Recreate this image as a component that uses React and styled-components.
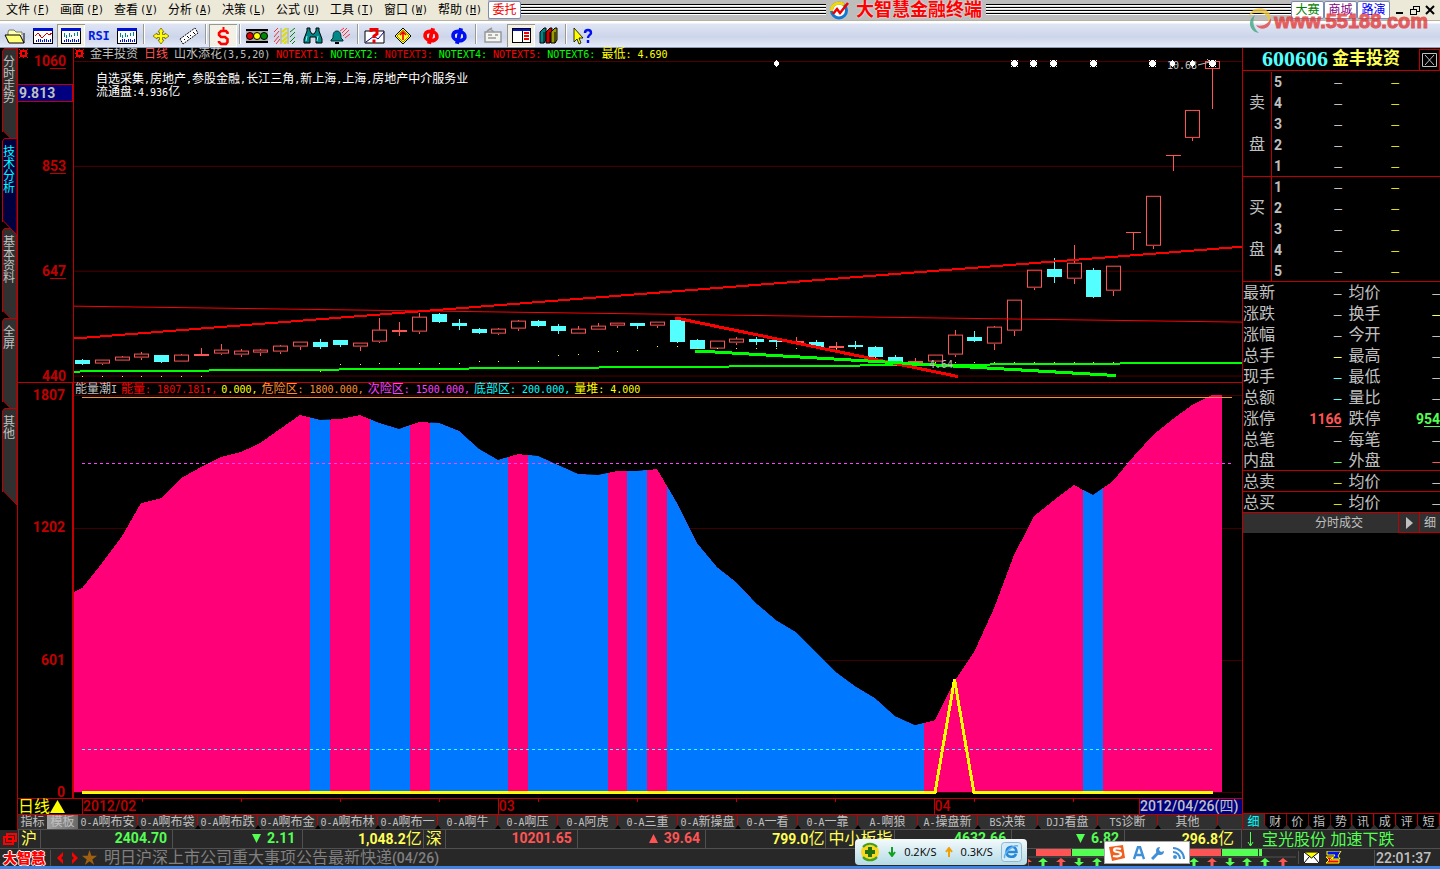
import React from 'react'
import styled, { createGlobalStyle, css } from 'styled-components'

const GlobalStyle = createGlobalStyle`
  * { box-sizing: border-box; }
  body {
    margin: 0;
    background: #000;
    font-family: 'DejaVu Sans Mono', 'Noto Sans CJK SC', monospace;
    font-size: 10px;
  }
  button {
    margin: 0;
    padding: 0;
    border: 0;
    background: none;
    font: inherit;
    color: inherit;
    cursor: pointer;
  }
  a { color: inherit; text-decoration: none; }
  svg { display: block; }
`

const han = `'Liberation Sans', 'Noto Sans CJK SC', sans-serif`

const num = css`
  font-family: Roboto, 'Noto Sans CJK SC', sans-serif;
  font-size: 14px;
  font-weight: 700;
`

const Han = styled.span`
  font-family: ${han};
  font-size: ${p => p.$size}px;
  font-weight: 400;
`

// chinese glyphs are drawn one step larger than the latin ones beside them
const Mix = ({ children, size = 12 }) =>
  String(children).split(/([^\x00-\x7f]+)/).filter(Boolean).map((t, i) =>
    /[^\x00-\x7f]/.test(t) ? <Han key={i} $size={size}>{t}</Han> : <span key={i}>{t}</span>
  )

/* ---------- data ---------- */

const menus = [['文件', 'F'], ['画面', 'P'], ['查看', 'V'], ['分析', 'A'], ['决策', 'L'], ['公式', 'U'], ['工具', 'T'], ['窗口', 'W'], ['帮助', 'H']]
const sideTabs = ['分时走势', '技术分析', '基本资料', '全屏', '其他']
const templates = ['0-A啊布安', '0-A啊布袋', '0-A啊布跌', '0-A啊布金', '0-A啊布林', '0-A啊布一', '0-A啊牛', '0-A啊压', '0-A阿虎', '0-A三重', '0-A新操盘', '0-A一看', '0-A一靠', 'A-啊狼', 'A-操盘新', 'BS决策', 'DJJ看盘', 'TS诊断', '其他']
const infoTabs = ['细', '财', '价', '指', '势', '讯', '成', '评', '短']

const GREY = '#c0c0c0'
const YEL = '#ffff54'
const RED = '#ff5454'
const GRN = '#54ff54'
const CYA = '#54ffff'

const quotes = [
  ['最新', GREY, '均价', GREY], ['涨跌', GREY, '换手', YEL], ['涨幅', GREY, '今开', GREY],
  ['总手', YEL, '最高', GREY], ['现手', CYA, '最低', GREY], ['总额', CYA, '量比', GREY],
  ['涨停', RED, '跌停', GRN, '1166', '954'], ['总笔', GREY, '每笔', GREY], ['内盘', GRN, '外盘', RED],
]
const totals = [['总卖', '#e0e000', '均价', GREY], ['总买', '#e0e000', '均价', GREY]]

// kind, body top, body bottom, high, low
const candles = [
  ['d', 360, 364, 359, 365], ['u', 360, 364, 360, 365], ['u', 357, 361, 356, 361], ['u', 354, 358, 352, 360],
  ['d', 355, 362, 355, 363], ['u', 355, 362, 354, 362], ['u', 354, 356, 348, 356], ['u', 350, 354, 344, 355],
  ['u', 351, 355, 349, 357], ['u', 350, 353, 349, 356], ['u', 346, 352, 345, 354], ['u', 342, 347, 342, 350],
  ['d', 342, 347, 339, 349], ['d', 340, 345, 340, 347], ['u', 343, 347, 343, 351], ['u', 330, 342, 318, 343],
  ['u', 330, 332, 322, 336], ['u', 317, 332, 313, 334], ['d', 314, 322, 313, 323], ['d', 323, 326, 319, 330],
  ['d', 329, 333, 328, 334], ['u', 329, 334, 328, 335], ['u', 321, 329, 320, 331], ['d', 321, 326, 320, 327],
  ['d', 326, 331, 324, 334], ['u', 329, 334, 326, 334], ['u', 326, 330, 323, 330], ['u', 323, 326, 323, 328],
  ['d', 323, 326, 323, 329], ['u', 322, 326, 322, 328], ['d', 320, 342, 320, 343], ['d', 340, 349, 339, 349],
  ['u', 341, 349, 341, 349], ['u', 339, 343, 337, 345], ['d', 339, 342, 337, 345], ['d', 340, 342, 340, 347],
  ['u', 341, 343, 337, 343], ['d', 342, 347, 340, 349], ['u', 346, 348, 342, 350], ['d', 345, 347, 341, 349],
  ['d', 347, 357, 346, 359], ['d', 357, 362, 355, 362], ['u', 361, 363, 358, 363], ['u', 355, 362, 355, 362],
  ['u', 335, 355, 330, 357], ['d', 337, 341, 331, 342], ['u', 327, 344, 326, 350], ['u', 300, 331, 300, 336],
  ['u', 270, 288, 270, 290], ['d', 269, 277, 258, 283], ['u', 263, 279, 245, 284], ['d', 270, 297, 268, 298],
  ['u', 266, 291, 266, 296], ['u', 232, 233, 232, 250], ['u', 196, 246, 196, 249], ['u', 155, 156, 155, 171],
  ['u', 110, 138, 110, 141], ['u', 61, 69, 61, 109],
]
const dots = [376, 376, 376, 376, 376, 376, 376, 0, 0, 0, 0, 0, 371, 364, 364, 363, 363, 363, 363, 363, 361, 361, 361, 361, 355, 354, 351, 351, 350, 346, 346, 348, 348, 348, 348, 348, 348, 348, 348, 348, 357, 362, 362, 362, 362, 362, 362, 362, 362, 362, 362, 362, 362]
const energy = [588, 563, 536, 503, 498, 478, 467, 457, 452, 443, 429, 415, 420, 419, 415, 423, 429, 422, 423, 431, 449, 460, 454, 456, 465, 474, 475, 471, 471, 469, 503, 543, 567, 582, 603, 620, 632, 652, 672, 686, 698, 716, 725, 720, 680, 652, 608, 555, 516, 500, 485, 495, 481, 457, 435, 419, 405, 395]
const blueRuns = [[310, 20], [370, 40], [430, 78], [528, 80], [627, 20], [667, 257], [1083, 20]]

const cx = i => Math.round(82 + i * 19.83)

/* ---------- title bar ---------- */

const Page = styled.div`
  min-height: 100vh;
  display: flex;
  flex-direction: column;
  position: relative;
`
const TitleBar = styled.header`
  height: 20px;
  display: flex;
  align-items: stretch;
  background: #ece9d8;
  color: #000;
`
const Menu = styled.nav`
  display: flex;
  padding-left: 6px;
  button {
    width: 54px;
    display: flex;
    gap: 2px;
    align-items: center;
    white-space: nowrap;
    line-height: 20px;
  }
  button:last-child { width: 50px; }
`
const Stripes = styled.div`
  flex: 1;
  height: 11px;
  margin-top: 4px;
  background: repeating-linear-gradient(#000 0 1px, #fff 1px 2px, #ddd 2px 3px);
`
const Banner = styled.div`
  flex: 1;
  display: flex;
  background: #bdbdbd;
`
const Brand = styled.h1`
  margin: 0 4px 0 3px;
  display: flex;
  align-items: center;
  gap: 6px;
  font: 700 18px/20px ${han};
  color: #f00;
  text-shadow: 0 0 2px #fff;
  white-space: nowrap;
`
const Chip = styled.button`
  width: 33px;
  height: 18px;
  margin-top: 1px;
  flex: none;
  && {
    border: 1px solid #7b8bb5;
    background: #fff;
    color: ${p => p.$color};
    font: 12px/16px ${han};
  }
  border-radius: 2px;
`
const WindowButtons = styled.div`
  flex: none;
  width: 50px;
  display: flex;
  justify-content: space-evenly;
  align-items: center;
`

/* ---------- toolbar ---------- */

const ToolBar = styled.div`
  height: 28px;
  display: flex;
  border-top: 1px solid #b5b29f;
  border-bottom: 1px solid #8f9bb3;
  background: linear-gradient(#fff 0 2px, #dfe5f4 3px, #cdd5ea 16px, #e4eaf7);
  padding: 3px 0 0 1px;
`
const Tool = styled.button`
  width: 28px;
  height: 23px;
  display: grid;
  place-items: center;
  ${p => p.$on && css`
    && { background: #f3f0e6; }
    box-shadow: inset 1px 1px #9a9888, inset -1px -1px #fff;
  `}
`
const Sep = styled.i`
  width: 2px;
  height: 20px;
  margin: 0 2px;
  border-left: 1px solid #9c9a8c;
  border-right: 1px solid #fff;
`
const Rsi = styled.b`
  font: 700 12px/20px 'DejaVu Sans Mono', monospace;
  color: #0020e0;
`

/* ---------- body ---------- */

const Body = styled.main`
  flex: 1;
  display: flex;
  min-height: 0;
`
const Rail = styled.nav`
  flex: 0 0 18px;
  border-right: 1px solid #c00000;
`
const RailTab = styled.button`
  position: relative;
  display: block;
  width: 17px;
  height: 90px;
  z-index: ${p => (p.$on ? 3 : 1)};
  && { color: ${p => (p.$on ? '#00ffff' : GREY)}; }
  svg { position: absolute; left: 0; top: 0; }
  span {
    position: relative;
    display: block;
    width: 12px;
    height: 82px;
    margin: 8px 0 0 3px;
    font: 12px/12px ${han};
    word-break: break-all;
  }
`
const Work = styled.section`
  flex: 1;
  min-width: 0;
  display: flex;
  flex-direction: column;
`
const Pane = styled.div`
  flex: ${p => p.$grow} 1 0;
  min-height: 0;
  display: flex;
  position: relative;
  border-top: ${p => (p.$line ? '1px solid #c00000' : '0')};
`
const Axis = styled.div`
  position: relative;
  flex: 0 0 56px;
  display: flex;
  flex-direction: column;
  justify-content: space-between;
  align-items: flex-end;
  padding: ${p => p.$top}px 7px 0 0;
  border-right: ${p => p.$bar}px solid #c00000;
  ${num}
  line-height: 12px;
  color: #c00000;
  u { text-underline-offset: 2px; text-decoration-thickness: 1px; }
`
const AxisMark = styled.output`
  position: absolute;
  left: 0;
  right: 0;
  top: 36px;
  height: 18px;
  padding-left: 1px;
  line-height: 17px;
  background: #000080;
  border: 1px solid #c00000;
  border-left: 0;
  color: ${GREY};
`
const Corner = styled.span`
  position: absolute;
  left: 1px;
  top: 1px;
`
const Plot = styled.div`
  position: relative;
  flex: 1;
  min-width: 0;
  > svg { position: absolute; inset: 0; width: 100%; height: 100%; }
`
const Legend = styled.div`
  position: relative;
  display: flex;
  align-items: baseline;
  gap: ${p => p.$gap}px;
  padding-left: ${p => p.$left}px;
  line-height: 13px;
  white-space: nowrap;
  color: ${GREY};
`
const Tint = styled.span`
  color: ${p => p.$c};
`
const Note = styled.p`
  position: relative;
  margin: 12px 0 0 22px;
  font-size: 10px;
  line-height: 12px;
  color: #fff;
`
const Timeline = styled.div`
  height: 16px;
  display: flex;
  border-top: 1px solid #c00000;
  ${num}
  font-weight: 500;
  line-height: 15px;
  color: #c00000;
`
const Period = styled.button`
  flex: 0 0 64px;
  text-align: left;
  display: flex;
  align-items: center;
  && { color: #ffff00; }
`
const Month = styled.div`
  flex: ${p => p.$grow} 1 0;
  border-left: 1px solid #c00000;
  background: linear-gradient(90deg, #c00000 1px, transparent 1px) ${p => p.$tick}px 0 / 99px 3px repeat-x;
`
const Today = styled.time`
  flex: 0 0 103px;
  background: #000080;
  border-left: 1px solid #c00000;
  color: ${GREY};
  white-space: nowrap;
`
const Tabs = styled.div`
  height: 16px;
  display: flex;
  background: #303030;
  border-top: 1px solid #c00000;
  border-bottom: 1px solid #505050;
  color: ${GREY};
`
const Tab = styled.button`
  position: relative;
  flex: ${p => (p.$w ? `0 0 ${p.$w}px` : '60 1 0')};
  min-width: 0;
  height: 14px;
  line-height: 14px;
  white-space: nowrap;
  ${p => p.$on && css`&& { background: linear-gradient(90deg, #a0a0a0, #686868); }`}
  ${p => !p.$w && css`
    && { border-right: 1px solid #c00000; }
    &::after {
      content: '';
      position: absolute;
      right: -4px;
      bottom: 0;
      border: 3px solid transparent;
      border-top: 0;
      border-bottom: 4px solid #000;
    }
  `}
`

/* ---------- right panel ---------- */

const Panel = styled.aside`
  flex: 0 0 198px;
  display: flex;
  flex-direction: column;
  border-left: 1px solid #c00000;
  color: ${GREY};
`
const StockName = styled.h2`
  margin: 0 0 1px;
  height: 23px;
  display: flex;
  align-items: center;
  padding-left: 19px;
  border-bottom: 1px solid #c00000;
  font: 700 22px/22px 'Liberation Serif', serif;
  color: ${CYA};
  b {
    flex: 1;
    margin-left: 4px;
    font: 700 17px/22px ${han};
    color: ${YEL};
  }
  button {
    width: 21px;
    height: 21px;
    border: 1px solid #c00000;
    border-bottom: 0;
    display: grid;
    place-items: center;
  }
`
const Depth = styled.div`
  display: flex;
  box-shadow: inset 0 -1px #c00000;
`
const Side = styled.div`
  flex: 0 0 29px;
  border-right: 1px solid #c00000;
  padding: 21px 0 22px 6px;
  display: flex;
  flex-direction: column;
  justify-content: space-between;
  font: 16px/20px ${han};
`
const Levels = styled.table`
  flex: 1;
  border-collapse: collapse;
  table-layout: fixed;
  ${num}
  td, th {
    height: 21px;
    padding: 0;
    line-height: 21px;
    text-align: right;
  }
  th { width: 20px; text-align: left; padding-left: 2px; }
  td:nth-child(2) { width: 50px; }
  td:nth-child(3) { width: 57px; color: #e0e000; }
`
const Quotes = styled.table`
  width: 197px;
  border-collapse: collapse;
  table-layout: fixed;
  ${num}
  box-shadow: inset 0 -1px #c00000;
  td, th { height: 21px; padding: 0; line-height: 20px; text-align: right; }
  th {
    width: 40px;
    text-align: left;
    font: 16px/20px ${han};
    white-space: nowrap;
  }
  th:nth-child(3) { padding-left: 7px; }
  u { text-underline-offset: 2px; text-decoration-thickness: 1px; }
`
const Cell = styled.td`
  color: ${p => p.$c};
`
const Dash = styled.span`
  font: 400 14px/20px 'Liberation Sans', sans-serif;
`
const DealBar = styled.div`
  display: flex;
  height: 20px;
  background: #303030;
  font: 12px/20px ${han};
  button:first-child { flex: 1; padding-left: 37px; }
  button + button {
    width: 21px;
    border: 1px solid #c00000;
    border-width: 0 0 1px 1px;
    display: grid;
    place-items: center;
  }
`
const InfoTabs = styled.div`
  margin-top: auto;
  height: 17px;
  display: flex;
  border-top: 1px solid #c00000;
  border-bottom: 1px solid #505050;
  background: #303030;
`
const InfoTab = styled.button`
  flex: 1;
  position: relative;
  height: 15px;
  && {
    font: 12px/14px ${han};
    color: ${p => (p.$on ? '#00ffff' : GREY)};
    background: ${p => (p.$on ? '#303030' : '#000')};
    border-right: 1px solid #c00000;
  }
  clip-path: polygon(0 0, 100% 0, 100% 70%, 82% 100%, 18% 100%, 0 70%);
`

/* ---------- status rows ---------- */

const Status = styled.div`
  height: 18px;
  display: flex;
  background: #282828;
  ${num}
  line-height: 17px;
  color: ${GREY};
`
const Market = styled.div`
  flex: 0 0 ${p => p.$w}px;
  border-right: 1px solid #505050;
  padding-left: 2px;
  font: 16px/17px ${han};
  color: ${YEL};
`
const Figure = styled.div`
  flex: ${p => p.$grow} 1 0;
  border-right: 1px solid #505050;
  padding-right: ${p => p.$pad || 5}px;
  text-align: right;
  white-space: nowrap;
  color: ${p => p.$c};
  svg { display: inline-block; margin-right: 6px; }
`
const Alert = styled.a`
  flex: 0 0 198px;
  display: flex;
  align-items: center;
  gap: 8px;
  padding-left: 5px;
  && { color: ${GRN}; }
  font: 16px/17px ${han};
  white-space: nowrap;
`
const Ticker = styled(Status)`
  border-top: 1px solid #505050;
  align-items: center;
  color: #808080;
  font-weight: 500;
`
const Logo = styled.b`
  width: 51px;
  padding-left: 3px;
  border-right: 1px solid #505050;
  font: 900 14px/16px ${han};
  color: #f00;
  text-shadow: 1px 0 #fff, -1px 0 #fff, 0 1px #fff, 0 -1px #fff;
`
const Arrows = styled.svg`
  margin: 0 4px 0 6px;
`
const News = styled.a`
  flex: 1;
  padding-left: 7px;
  white-space: nowrap;
`
const Breadth = styled.svg`
  flex: 0 0 270px;
`
const Tray = styled.div`
  flex: 0 0 76px;
  display: flex;
  gap: 6px;
  align-items: center;
  padding-left: 5px;
  border-left: 1px solid #505050;
`
const Clock = styled.time`
  flex: 0 0 66px;
  padding-left: 1px;
  border-left: 1px solid #505050;
  line-height: 16px;
  color: ${GREY};
`
const TaskEdge = styled.div`
  height: 3px;
  background: #3c85e4;
`

/* ---------- floating widgets ---------- */

const Floating = styled.div`
  position: absolute;
  z-index: 9;
  display: flex;
  align-items: center;
  color: #000;
`
const SpeedBall = styled(Floating)`
  right: 413px;
  bottom: 4px;
  width: 172px;
  height: 26px;
  padding: 0 5px;
  justify-content: space-between;
  border-radius: 4px;
  background: linear-gradient(#f4fafc, #b4dbe6);
  font: 11px/26px 'Open Sans', sans-serif;
`
const ImeBar = styled(Floating)`
  right: 250px;
  bottom: 5px;
  width: 86px;
  height: 23px;
  padding: 0 3px;
  justify-content: space-between;
  background: #fff;
  border: 1px solid #a8a8a8;
`
const Watermark = styled(Floating)`
  right: 12px;
  top: 7px;
  gap: 2px;
  color: #e03c3c;
  opacity: 0.8;
  pointer-events: none;
  font: 700 20px/26px 'Liberation Sans', sans-serif;
  -webkit-text-stroke: 1px #e03c3c;
`

/* ---------- icons ---------- */

const ChartIcon = ({ red }) => (
  <svg width="22" height="18" viewBox="0 0 22 18" shapeRendering="crispEdges">
    <path d="M1.500 1.500h19v15h-19z" fill="#fff" stroke="#000" />
    <path d="M1 1h20v3H1z" fill="#0010d0" />
    {red
      ? <path d="M3 9l3-3 4 5 5-5 2 2 3-2" fill="none" stroke="#d00" />
      : <path d="M4.500 6v4M6.500 8v3M9.500 6v4M11.500 8v2M14.500 6v3M17.500 5v4" stroke="#088" />}
    <path d="M4.500 15v-2M6.500 15v-3M8.500 15v-3M10.500 15v-2M12.500 15v-3M14.500 15v-3M16.500 15v-2M18.500 15v-3" stroke="#0010d0" />
  </svg>
)
const Phi = ({ c }) => (
  <svg width="18" height="18" viewBox="0 0 18 18">
    <g transform="rotate(15 9 9)" fill="none" stroke={c}>
      <ellipse cx="9" cy="9" rx="6" ry="4.500" strokeWidth="3.800" />
      <path d="M9 1v16" strokeWidth="4" />
    </g>
    <path d="M6 7v4M12 7v4" stroke="#fff" />
  </svg>
)
const icons = {
  folder: <svg width="22" height="18" viewBox="0 0 22 18"><path d="M4 15V5l1-2h5l2 2h6v3" fill="#ffffb0" stroke="#777" /><path d="M5 16L1 8h15l4 8z" fill="#ffff78" stroke="#000" /><path d="M20 16V6" stroke="#000" /></svg>,
  cross: <svg width="18" height="18" viewBox="0 0 18 18"><path d="M9 1l3 4h-1.500v2.500H13V6l4 3-4 3v-1.500h-2.500V13H12l-3 4-3-4h1.500v-2.500H5V12L1 9l4-3v1.500h2.500V5H6z" fill="#ff0" stroke="#665500" strokeWidth="0.700" /></svg>,
  ruler: <svg width="22" height="18" viewBox="0 0 22 18"><path d="M2 12L17 1l3 5L5 17z" fill="#fff" stroke="#000" strokeDasharray="2 1" /><path d="M6 12l1 1M9 9l2 2M12 8l1 1M15 5l2 2" stroke="#000" /></svg>,
  money: <svg width="16" height="20" viewBox="0 0 16 20"><path d="M12.500 8V6.500L11 5H6L4 7v2l2 2h4l2.500 2v3L11 18H6l-2-2v-1" fill="none" stroke="#f00" strokeWidth="2.600" /><path d="M8.500 1v5" stroke="#f00" strokeWidth="2" /></svg>,
  lights: <svg width="22" height="14" viewBox="0 0 22 14"><path d="M0 0h22v14H0z" fill="#aaa" /><path d="M0 1h22M0 13h22" stroke="#000" strokeWidth="2" /><circle cx="4" cy="7" r="3.500" fill="#d00" stroke="#000" /><circle cx="11" cy="7" r="3.500" fill="#ff0" stroke="#000" /><circle cx="18" cy="7" r="3.500" fill="#080" stroke="#000" /></svg>,
  hatch: <svg width="22" height="16" viewBox="0 0 22 16"><path d="M0 4l4-4M0 9l5-6M0 14l5-6M2 16l4-5" stroke="#e33" /><path d="M8 4l5-4M8 9l5-5M8 14l5-5M10 16l3-3" stroke="#dd0" strokeWidth="2" /><path d="M7 0v16M14 0v16" stroke="#aa8" /><path d="M16 4l5-4M16 9l5-5M16 14l5-5M18 16l3-3" stroke="#080" /></svg>,
  glasses: <svg width="20" height="17" viewBox="0 0 20 17"><path d="M4 1h3v3l2 3h2l2-3V1h3v3l3 8v4h-6v-6H7v6H1v-4l3-8z" fill="#088" stroke="#000" /><path d="M4 9l-1 5M15 9l-1 5" stroke="#8ff" /></svg>,
  bell: <svg width="22" height="18" viewBox="0 0 22 18"><path d="M7 4c4 0 4 5 4 7l2 2v1H1v-1l2-2c0-3 0-7 4-7z" fill="#088" stroke="#033" /><path d="M5 16h4" stroke="#000" strokeWidth="2" /><path d="M10 4l4-3M12 6l5-5M13 9l6-6M15 11l5-4" stroke="#f33" /></svg>,
  ask: <svg width="22" height="18" viewBox="0 0 22 18"><path d="M1 4h19v12H1z" fill="#fff" stroke="#000" /><path d="M2 15l8-6 4 3 6-7" fill="none" stroke="#008" /><path d="M7 5V2.500h6V7l-3 2v2M10 12.500V16" fill="none" stroke="#e00" strokeWidth="3" /></svg>,
  sign: <svg width="18" height="18" viewBox="0 0 18 18"><path d="M9 1l8 8-8 8-8-8z" fill="#ff3" stroke="#000" /><path d="M9 3l6 6-6 6-6-6z" fill="none" stroke="#a80" /><path d="M9 13V6M6 8l3-3 3 3" fill="none" stroke="#e00" strokeWidth="1.600" /></svg>,
  mail: <svg width="20" height="17" viewBox="0 0 20 17"><path d="M2 5h16v10H2z" fill="#f4f4f0" stroke="#999" strokeWidth="1.500" /><path d="M4 4l5-3M5 8h4M12 8h3M5 11h8M3 5l4-3 4 3" fill="none" stroke="#999" strokeWidth="1.500" /></svg>,
  window: <svg width="19" height="15" viewBox="0 0 19 15" shapeRendering="crispEdges"><path d="M.5.5h18v14H.5z" fill="#fff" stroke="#000" /><path d="M1 2h17" stroke="#0010d0" strokeWidth="2" /><path d="M10.500 3v11" stroke="#000" /><path d="M12 5h5M12 8h5M12 11h5" stroke="#e00" strokeWidth="2" /></svg>,
  books: <svg width="20" height="18" viewBox="0 0 20 18"><path d="M1 5l4-4h2v12l-2 3H1z" fill="#088" stroke="#000" /><path d="M7 5l4-4h2v12l-2 3H7z" fill="#c00" stroke="#000" /><path d="M12 5l4-4h2v12l-2 3h-4z" fill="#990" stroke="#000" /><path d="M5 5v11M11 5v11M16 5v11" stroke="#000" /></svg>,
  help: <svg width="20" height="18" viewBox="0 0 20 18"><path d="M1 1v14l3-3 2 5 2-1-2-5h4z" fill="#ff0" stroke="#000" strokeWidth="0.800" /><path d="M12 6c0-4 6-4 6 0 0 2-3 2-3 5M15 13v3" fill="none" stroke="#0010f0" strokeWidth="2.400" /></svg>,
}
icons.line = <ChartIcon red />
icons.bars = <ChartIcon />
icons.rsi = <Rsi>RSI</Rsi>
icons.phiRed = <Phi c="#f00" />
icons.phiBlue = <Phi c="#0010f0" />

const tools = ['folder', 'line', 'bars*', 'rsi', 'bars', '|', 'cross', 'ruler', '|', 'money*', '|', 'lights', 'hatch', 'glasses', 'bell', '|', 'ask', 'sign', 'phiRed', 'phiBlue', '|', 'mail', 'window*', 'books', '|', 'help']

const Gear = () => (
  <svg width="9" height="9" viewBox="0 0 9 9" shapeRendering="crispEdges">
    <path d="M2 2h5v5H2z" fill="none" stroke="#f00" strokeWidth="2" />
    <path d="M0 0h1v1H0zM8 0h1v1H8zM0 8h1v1H0zM8 8h1v1H8zM4 0h1v1H4zM4 8h1v1H4zM0 4h1v1H0zM8 4h1v1H8z" fill="#f00" />
  </svg>
)

/* ---------- charts ---------- */

const Star = ({ x }) => (
  <path d={`M${x - 2} 61h5v5h-5zM${x - 1} 60h3v7h-3zM${x - 3} 62h7v3h-7zM${x - 3} 60h1v1h-1zM${x + 3} 60h1v1h-1zM${x - 3} 66h1v1h-1zM${x + 3} 66h1v1h-1z`} fill="#fff" />
)
const Drop = ({ x }) => (
  <path d={`M${x} 60h1v7h-1zM${x - 1} 61h3v5h-3zM${x - 2} 62h5v3h-5z`} fill="#fff" />
)

const PriceChart = () => (
  <svg viewBox="74 48 1168 334" preserveAspectRatio="none" shapeRendering="crispEdges">
    {[61, 166, 271, 376].map(y => <path key={y} d={`M73 ${y + 0.5}H1242`} stroke="#500000" />)}
    {candles.map(([kind, top, bot, hi, lo], i) => {
      const x = cx(i)
      const c = kind === 'u' ? RED : CYA
      return (
        <g key={i} fill={c}>
          <rect x={x} y={hi} width="1" height={Math.max(top - hi, 0)} />
          <rect x={x} y={bot} width="1" height={Math.max(lo - bot, 0)} />
          {kind === 'u' && bot - top > 2
            ? <rect x={x - 6.5} y={top + 0.5} width="14" height={bot - top - 1} fill="none" stroke={c} />
            : <rect x={x - 7} y={top} width="15" height={bot - top} />}
        </g>
      )
    })}
    {dots.map((y, i) => y > 0 && <rect key={i} x={cx(i)} y={y} width="1" height="1" fill="#ff0" />)}
    <path d="M73 306.500L1242 322.500" stroke="#f00" />
    <path d="M73 339L1242 247" stroke="#f00" strokeWidth="2" />
    <path d="M73 372L1242 363" stroke="#0f0" strokeWidth="2" />
    <path d="M675 319h4L958 377" fill="none" stroke="#f00" strokeWidth="3" />
    <path d="M695 351.500h4L1116 376" fill="none" stroke="#0f0" strokeWidth="3" />
    <g fill={GREY} fontSize="10" fontFamily="DejaVu Sans Mono, monospace">
      <text x="1167" y="69">10.68</text>
      <text x="929" y="368">4.64</text>
    </g>
    <path d="M1198 65l12-3-3-3" fill="none" stroke={GREY} />
    {[1014, 1033, 1053, 1093, 1152, 1212].map(x => <Star key={x} x={x} />)}
    {[776, 1172, 1192].map(x => <Drop key={x} x={x} />)}
  </svg>
)

const area = `M73 592 ${energy.map((y, i) => `L${cx(i)} ${y}`).join(' ')} L1222 395 V792 H73Z`

const EnergyChart = () => (
  <svg viewBox="74 383 1168 415" preserveAspectRatio="none" shapeRendering="crispEdges">
    <defs><clipPath id="hill"><path d={area} /></clipPath></defs>
    {[395, 528, 660, 792].map(y => <path key={y} d={`M73 ${y + 0.5}H1242`} stroke="#400000" />)}
    <path d={area} fill="#ff0078" />
    <g clipPath="url(#hill)" fill="#0078ff">
      {blueRuns.map(([x, w]) => <rect key={x} x={x} y="390" width={w} height="402" />)}
    </g>
    <path d="M82 397.500H1232" stroke="#ff9030" />
    <path d="M82 463.500H1232" stroke="#ff40ff" strokeDasharray="3 3" />
    <path d="M82 749.500H1212" stroke="#40ffff" strokeDasharray="3 3" />
    <path d="M82 792.500H935L954.500 679L974 792.500H1213" fill="none" stroke="#ff0" strokeWidth="3" />
  </svg>
)

const RailShape = ({ on }) => (
  <svg width="17" height="98" viewBox="0 0 17 98">
    <path d="M2.500 84V3l2-2.500H17V97L2.500 82" fill={on ? '#000040' : '#303030'} stroke="#c00000" />
  </svg>
)

const ArrowMark = ({ x, up, c }) => (
  <path transform={`translate(${x} 0)`} fill={c}
    d={up ? 'M0 9l5 4H1.500v4h-3v-4H-5z' : 'M0 17l5-4H1.500V9h-3v4H-5z'} />
)
const marks = [[-1, 1, RED], [15, 1, GRN], [33, 1, RED], [51, 0, GRN], [69, 1, GRN], [166, 1, GRN], [184, 1, RED], [202, 0, GRN], [219, 1, GRN], [237, 1, GRN], [255, 1, RED]]

const Trend = ({ up }) => (
  <svg width="9" height="9" viewBox="0 0 9 9" aria-label={up ? 'up' : 'down'}>
    <path d={up ? 'M4.500 0L9 9H0z' : 'M4.500 9L9 0H0z'} fill={up ? RED : GRN} />
  </svg>
)

const dash = <Dash>–</Dash>

const DepthBlock = ({ chars, levels }) => (
  <Depth>
    <Side>{chars.map(c => <span key={c}>{c}</span>)}</Side>
    <Levels>
      <tbody>
        {levels.map(n => <tr key={n}><th scope="row">{n}</th><td>{dash}</td><td>{dash}</td><td /></tr>)}
      </tbody>
    </Levels>
  </Depth>
)

const Price = ({ v }) => v ? <>{v.slice(0, -2)}<u>{v.slice(-2)}</u></> : dash

const QuoteTable = ({ rows }) => (
  <Quotes>
    <tbody>
      {rows.map(([a, c1, b, c2, v1, v2]) => (
        <tr key={a}>
          <th scope="row">{a}</th><Cell $c={c1}><Price v={v1} /></Cell>
          <th scope="row">{b}</th><Cell $c={c2}><Price v={v2} /></Cell>
        </tr>
      ))}
    </tbody>
  </Quotes>
)

const App = () => {
  return <Page>
    <GlobalStyle />
    <TitleBar>
      <Menu>
        {menus.map(([name, key]) => (
          <button type="button" key={key}><Han $size={12}>{name}</Han><span>(<u>{key}</u>)</span></button>
        ))}
      </Menu>
      <Banner>
        <Chip type="button" $color="#f00000">委托</Chip>
        <Stripes />
        <Brand>
          <svg width="21" height="19" viewBox="0 0 21 19">
            <circle cx="10" cy="9.500" r="7.500" fill="#fff" stroke="#1078d0" strokeWidth="3" />
            <path d="M2.500 10A7.500 7.500 0 0 1 15 4" fill="none" stroke="#f8d800" strokeWidth="3" />
            <path d="M4 13l4-5 3 4 8-10" fill="none" stroke="#f00000" strokeWidth="2.500" />
          </svg>
          大智慧金融终端
        </Brand>
        <Stripes />
        <Chip type="button" $color="#008000">大赛</Chip>
        <Chip type="button" $color="#800080">商城</Chip>
        <Chip type="button" $color="#0000ff">路演</Chip>
      </Banner>
      <WindowButtons>
        <button type="button" aria-label="minimize"><svg width="10" height="10"><path d="M1 8h7" stroke="#000" strokeWidth="2" /></svg></button>
        <button type="button" aria-label="restore"><svg width="10" height="10" shapeRendering="crispEdges"><path d="M3.500 4V1.500h6v5H7M.5 4.500h6v5h-6zM3 1h7M0 4h7" fill="none" stroke="#000" /></svg></button>
        <button type="button" aria-label="close"><svg width="10" height="10"><path d="M1 1l8 8M9 1L1 9" stroke="#000" strokeWidth="2" /></svg></button>
      </WindowButtons>
    </TitleBar>

    <ToolBar>
      {tools.map((t, i) => t === '|'
        ? <Sep key={i} />
        : <Tool type="button" key={i} aria-label={t.replace('*', '')} $on={t.endsWith('*')}>{icons[t.replace('*', '')]}</Tool>
      )}
    </ToolBar>

    <Body>
      <Rail>
        {sideTabs.map((t, i) => (
          <RailTab type="button" key={t} $on={i === 1}><RailShape on={i === 1} /><span>{t}</span></RailTab>
        ))}
      </Rail>

      <Work>
        <Pane $grow={334}>
          <Axis $top={7} $bar={1}>
            <Corner><Gear /></Corner>
            {['1060', '853', '647'].map(v => <span key={v}><Price v={v} /></span>)}
            <span>440</span>
            <AxisMark>9.813</AxisMark>
          </Axis>
          <Plot>
            <PriceChart />
            <Legend $left={1} $gap={6}>
              <Gear />
              <span><Mix>金丰投资</Mix><Tint $c={RED}> <Mix>日线</Mix></Tint></span>
              <span><Mix>山水添花(3,5,20)</Mix></span>
              {['#f00', '#0f0', '#e00000', '#0f0', '#f00', '#0f0'].map((c, i) => <Tint key={i} $c={c}>NOTEXT{i + 1}:</Tint>)}
              <Tint $c="#ff0"><Mix>最低: 4.690</Mix></Tint>
            </Legend>
            <Note>
              <Mix>自选采集,房地产,参股金融,长江三角,新上海,上海,房地产中介服务业</Mix><br />
              <Mix>流通盘:4.936亿</Mix>
            </Note>
          </Plot>
        </Pane>
        <Pane $grow={416} $line>
          <Axis $top={6} $bar={2}>
            {['1807', '1202', '601', '0'].map(v => <span key={v}>{v}</span>)}
          </Axis>
          <Plot>
            <EnergyChart />
            <Legend $left={1} $gap={4}>
              <span><Mix>能量潮I</Mix></span>
              <Tint $c="#f00"><Mix>能量: 1807.181</Mix><Tint $c={RED}>↑</Tint>,</Tint>
              <Tint $c="#ff0">0.000,</Tint>
              <Tint $c="#ff9030"><Mix>危险区: 1800.000,</Mix></Tint>
              <Tint $c="#ff40ff"><Mix>次险区: 1500.000,</Mix></Tint>
              <Tint $c="#0ff"><Mix>底部区: 200.000,</Mix></Tint>
              <Tint $c="#ff0"><Mix>量堆: 4.000</Mix></Tint>
            </Legend>
          </Plot>
        </Pane>
        <Timeline>
          <Period type="button">
            <Han $size={16}>日线</Han>
            <svg width="15" height="13"><path d="M7.500 0L15 13H0z" fill="#ff0" /></svg>
          </Period>
          <Month $grow={416} $tick={59}>2012/02</Month>
          <Month $grow={436} $tick={39}>03</Month>
          <Month $grow={205} $tick={39}>04</Month>
          <Today>2012/04/26(<Han $size={14}>四</Han>)</Today>
        </Timeline>
        <Tabs>
          <Tab type="button" $w={29}><Mix>指标</Mix></Tab>
          <Tab type="button" $w={31} $on><Mix>模板</Mix></Tab>
          {templates.map(t => <Tab type="button" key={t}><Mix>{t}</Mix></Tab>)}
          <Tab as="span" $w={24} />
        </Tabs>
      </Work>

      <Panel>
        <StockName>
          600606<b>金丰投资</b>
          <button type="button" aria-label="close panel">
            <svg width="15" height="14"><path d="M.5.5h14v13H.5zM3 2l9 10M12 2L3 12" fill="none" stroke={GREY} /></svg>
          </button>
        </StockName>
        <DepthBlock chars={['卖', '盘']} levels={[5, 4, 3, 2, 1]} />
        <DepthBlock chars={['买', '盘']} levels={[1, 2, 3, 4, 5]} />
        <QuoteTable rows={quotes} />
        {totals.map(r => <QuoteTable key={r[0]} rows={[r]} />)}
        <DealBar>
          <button type="button">分时成交</button>
          <button type="button" aria-label="next"><svg width="7" height="12"><path d="M0 0l7 6-7 6z" fill={GREY} /></svg></button>
          <button type="button">细</button>
        </DealBar>
        <InfoTabs>
          {infoTabs.map((t, i) => <InfoTab type="button" key={t} $on={i === 0}>{t}</InfoTab>)}
        </InfoTabs>
      </Panel>
    </Body>

    <Status>
      <Market $w={19}>
        <svg width="15" height="17"><path d="M5 4h9v7H5zM2 7h9v7H2z" fill="#282828" stroke="#f00" strokeWidth="2" /></svg>
      </Market>
      <Market $w={22}>沪</Market>
      <Figure $grow={132} $c={GRN}>2404.70</Figure>
      <Figure $grow={128} $c={GRN} $pad={7}><Trend />2.11</Figure>
      <Figure $grow={124} $c={YEL} $pad={1}>1,048.2<Han $size={16}>亿</Han></Figure>
      <Market $w={22}>深</Market>
      <Figure $grow={132} $c={RED}>10201.65</Figure>
      <Figure $grow={128} $c={RED}><Trend up />39.64</Figure>
      <Figure $grow={124} $c={YEL} $pad={1}>799.0<Han $size={16}>亿</Han></Figure>
      <Market $w={69}>中小板指</Market>
      <Figure $grow={116} $c={GRN}>4632.66</Figure>
      <Figure $grow={112} $c={GRN}><Trend />6.82</Figure>
      <Figure $grow={114} $c={YEL} $pad={7}>296.8<Han $size={16}>亿</Han></Figure>
      <Alert href="#">
        <svg width="7" height="15"><path d="M3.500 0v14M1 10l2.500 4L6 10" fill="none" stroke={GRN} /></svg>
        宝光股份 加速下跌
      </Alert>
    </Status>

    <Ticker>
      <Logo>大智慧</Logo>
      <Arrows width="21" height="12"><path d="M6 0v12L0 6zM15 0v12l6-6z" fill="#f00" /><path d="M6 4v4L4 6zM15 4v4l2-2z" fill="#282828" /></Arrows>
      <svg width="15" height="15" viewBox="0 0 16 16"><path d="M8 0l2 6h6l-5 4 2 6-5-4-5 4 2-6-5-4h6z" fill="#a06010" /></svg>
      <News href="#"><Mix size={16}>明日沪深上市公司重大事项公告最新快递(04/26)</Mix></News>
      <Breadth height="17" viewBox="0 0 270 17">
        <path d="M8 0h35v7H8zM155 0h38v7h-38z" fill={RED} />
        <path d="M44 0h36v7H44zM194 0h36v7h-36zM231 0h3v7h-3z" fill={GRN} />
        <path d="M0 8h268" stroke="#505050" />
        {marks.map(([x, up, c]) => <ArrowMark key={x} x={x} up={up} c={c} />)}
      </Breadth>
      <Tray>
        <svg width="15" height="11"><path d="M0 0h15v11H0z" fill="#fff" /><path d="M0 0l7.500 6L15 0z" fill="#ff0" stroke="#000" /><path d="M0 11l5-6M15 11l-5-6" stroke="#000" /></svg>
        <svg width="17" height="13" viewBox="0 0 17 13"><path d="M2 0h14l-3 5 2 3H7l3-4H2z" fill="#0010f0" stroke="#ff0" /><path d="M1 6h7l-3 3h9v3H1l3-3z" fill="#f00" stroke="#ff0" /></svg>
      </Tray>
      <Clock>22:01:37</Clock>
    </Ticker>
    <TaskEdge />

    <SpeedBall>
      <svg width="20" height="20" viewBox="0 0 20 20"><circle cx="10" cy="10" r="9" fill="#f8d820" /><path d="M3 5a9 9 0 0 1 14 0M3 15a9 9 0 0 0 14 0" fill="none" stroke="#40a020" strokeWidth="2" /><path d="M10 5v10M5 10h10" stroke="#207010" strokeWidth="4" /></svg>
      <svg width="8" height="10"><path d="M4 0v9M1 5l3 4 3-4" fill="none" stroke="#10a020" strokeWidth="2" /></svg>
      <span>0.2K/S</span>
      <svg width="8" height="10"><path d="M4 10V1M1 5l3-4 3 4" fill="none" stroke="#f0a000" strokeWidth="2" /></svg>
      <span>0.3K/S</span>
      <svg width="21" height="20" viewBox="0 0 21 20"><rect x="0.500" y="0.500" width="20" height="19" rx="3" fill="#d4ecf6" stroke="#90b8d0" /><path d="M5.500 10h10c0-7-10-7-10 0 0 6 8 6 9.500 2" fill="none" stroke="#2888d8" strokeWidth="2.600" /><path d="M4 16C1 13 12 2 17 4" fill="none" stroke="#60b0f0" strokeWidth="1.500" /></svg>
    </SpeedBall>
    <ImeBar>
      <svg width="18" height="18" viewBox="0 0 18 18"><path d="M1 3l14-2 2 13-13 3z" fill="#f06020" /><path d="M13 5c-3-1-7-1-7 1 0 3 7 1 7 4 0 2-4 3-8 2" fill="none" stroke="#fff" strokeWidth="2.200" /></svg>
      <svg width="12" height="14" viewBox="0 0 12 14"><path d="M1 13L5 1h2l4 12M3 9h6" fill="none" stroke="#4090d8" strokeWidth="2.400" /></svg>
      <svg width="14" height="14" viewBox="0 0 14 14"><path d="M1 13l6-6" stroke="#4090d8" strokeWidth="3" /><path d="M9 1a4 4 0 1 0 4 4l-3 1-2-2z" fill="#4090d8" /></svg>
      <svg width="14" height="14" viewBox="0 0 14 14"><circle cx="3" cy="11" r="2" fill="#4090d8" /><path d="M1 6a7 7 0 0 1 7 7M1 2a11 11 0 0 1 11 11" fill="none" stroke="#4090d8" strokeWidth="2" /></svg>
    </ImeBar>
    <Watermark>
      <svg width="24" height="27" viewBox="0 0 24 27"><path d="M1 9C3 0 17-2 22 7c1 3 0 6-2 8 0-6-3-9-8-9-5-1-8 0-11 3z" fill="#f0c840" /><path d="M23 11c1 11-11 14-15 7 5 2 12 0 15-7z" fill="#e04848" /><path d="M11 26C2 25-2 14 7 8c-3 6-2 13 4 18z" fill="#40a880" /></svg>
      www.55188.com
    </Watermark>
  </Page>
}

export default App
